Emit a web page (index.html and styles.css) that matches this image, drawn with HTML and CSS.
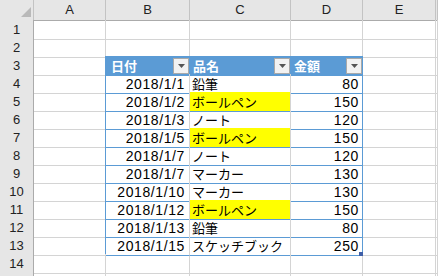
FILE: index.html
```html
<!DOCTYPE html>
<html lang="ja">
<head>
    <meta charset="UTF-8">
    <meta name="viewport" content="width=device-width, initial-scale=1.0">
    <title>Sheet1</title>
    <link rel="stylesheet" href="styles.css">
</head>
<body>
    <div class="sheet">
        <!-- column letters -->
        <div class="row head-row">
            <div class="corner">
                <svg width="33" height="19" viewBox="0 0 33 19"><polygon points="21,17 31,7 31,17" fill="#b9b9b9"/></svg>
            </div>
            <div class="ch">A</div>
            <div class="ch">B</div>
            <div class="ch">C</div>
            <div class="ch">D</div>
            <div class="ch">E</div>
            <div class="ch"></div>
        </div>

        <div class="row">
            <div class="rh">1</div>
            <div class="c"></div><div class="c"></div><div class="c"></div><div class="c"></div><div class="c"></div><div class="c"></div>
        </div>
        <div class="row">
            <div class="rh">2</div>
            <div class="c"></div><div class="c top"></div><div class="c top"></div><div class="c top"></div><div class="c"></div><div class="c"></div>
        </div>

        <!-- table header -->
        <div class="row">
            <div class="rh">3</div>
            <div class="c edge"></div>
            <div class="c th first"><span class="lbl">日付</span><span class="filter"><svg width="7" height="4" viewBox="0 0 7 4"><polygon points="0,0 7,0 3.5,4" fill="#555"/></svg></span></div>
            <div class="c th"><span class="lbl">品名</span><span class="filter"><svg width="7" height="4" viewBox="0 0 7 4"><polygon points="0,0 7,0 3.5,4" fill="#555"/></svg></span></div>
            <div class="c th"><span class="lbl">金額</span><span class="filter"><svg width="7" height="4" viewBox="0 0 7 4"><polygon points="0,0 7,0 3.5,4" fill="#555"/></svg></span></div>
            <div class="c"></div><div class="c"></div>
        </div>

        <div class="row">
            <div class="rh">4</div>
            <div class="c edge"></div>
            <div class="c td num">2018/1/1</div>
            <div class="c td txt">鉛筆</div>
            <div class="c td num last">80</div>
            <div class="c"></div><div class="c"></div>
        </div>
        <div class="row">
            <div class="rh">5</div>
            <div class="c edge"></div>
            <div class="c td num">2018/1/2</div>
            <div class="c td txt hl">ボールペン</div>
            <div class="c td num last">150</div>
            <div class="c"></div><div class="c"></div>
        </div>
        <div class="row">
            <div class="rh">6</div>
            <div class="c edge"></div>
            <div class="c td num">2018/1/3</div>
            <div class="c td txt">ノート</div>
            <div class="c td num last">120</div>
            <div class="c"></div><div class="c"></div>
        </div>
        <div class="row">
            <div class="rh">7</div>
            <div class="c edge"></div>
            <div class="c td num">2018/1/5</div>
            <div class="c td txt hl">ボールペン</div>
            <div class="c td num last">150</div>
            <div class="c"></div><div class="c"></div>
        </div>
        <div class="row">
            <div class="rh">8</div>
            <div class="c edge"></div>
            <div class="c td num">2018/1/7</div>
            <div class="c td txt">ノート</div>
            <div class="c td num last">120</div>
            <div class="c"></div><div class="c"></div>
        </div>
        <div class="row">
            <div class="rh">9</div>
            <div class="c edge"></div>
            <div class="c td num">2018/1/7</div>
            <div class="c td txt">マーカー</div>
            <div class="c td num last">130</div>
            <div class="c"></div><div class="c"></div>
        </div>
        <div class="row">
            <div class="rh">10</div>
            <div class="c edge"></div>
            <div class="c td num">2018/1/10</div>
            <div class="c td txt">マーカー</div>
            <div class="c td num last">130</div>
            <div class="c"></div><div class="c"></div>
        </div>
        <div class="row">
            <div class="rh">11</div>
            <div class="c edge"></div>
            <div class="c td num">2018/1/12</div>
            <div class="c td txt hl">ボールペン</div>
            <div class="c td num last">150</div>
            <div class="c"></div><div class="c"></div>
        </div>
        <div class="row">
            <div class="rh">12</div>
            <div class="c edge"></div>
            <div class="c td num">2018/1/13</div>
            <div class="c td txt">鉛筆</div>
            <div class="c td num last">80</div>
            <div class="c"></div><div class="c"></div>
        </div>
        <div class="row">
            <div class="rh">13</div>
            <div class="c edge"></div>
            <div class="c td num">2018/1/15</div>
            <div class="c td txt">スケッチブック</div>
            <div class="c td num last">250<span class="handle"></span></div>
            <div class="c"></div><div class="c"></div>
        </div>
        <div class="row">
            <div class="rh">14</div>
            <div class="c"></div><div class="c"></div><div class="c"></div><div class="c"></div><div class="c"></div><div class="c"></div>
        </div>
        <div class="row">
            <div class="rh"></div>
            <div class="c"></div><div class="c"></div><div class="c"></div><div class="c"></div><div class="c"></div><div class="c"></div>
        </div>
    </div>
</body>
</html>
```

FILE: styles.css
```css
html, body {
    margin: 0;
    height: 100%;
    overflow: hidden;
}
body {
    background: #fff;
    font-family: "Liberation Sans", Arial, sans-serif;
    color: #000;
}
.sheet {
    display: flex;
    flex-direction: column;
    height: 276px;
    overflow: hidden;
}
.row {
    display: grid;
    grid-template-columns: 34px 72px 84px 101px 72px 73px 1fr;
    flex: none;
    height: 18px;
}
.row > div {
    box-sizing: border-box;
    border-right: 1px solid #d4d4d4;
    border-bottom: 1px solid #d4d4d4;
}

/* column / row headers */
.head-row {
    height: 20px;
}
.head-row > div {
    background: #e6e6e6;
    border-right-color: #c3c3c3;
    border-bottom-color: #ababab;
}
.corner {
    line-height: 0;
}
.ch {
    font-size: 13px;
    text-align: center;
    line-height: 20px;
    color: #222;
}
.rh {
    background: #e6e6e6;
    border-right-color: #ababab !important;
    border-bottom-color: #c6c6c6 !important;
    font-size: 13px;
    text-align: center;
    line-height: 19px;
    color: #222;
}

/* table */
.top {
    border-bottom-color: #5b9bd5 !important;
}
.edge {
    border-right-color: #5b9bd5 !important;
}
.th {
    display: flex;
    align-items: center;
    background: #5b9bd5;
    border-right-color: #5b9bd5 !important;
    border-bottom-color: #5b9bd5 !important;
    padding-left: 3px;
    color: #fff;
    font-family: "Noto Sans CJK JP", sans-serif;
    font-weight: 700;
    font-size: 13px;
}
.th.first {
    padding-left: 5px;
}
.lbl {
    flex: 1;
    line-height: 17px;
}
.filter {
    display: flex;
    align-items: center;
    justify-content: center;
    box-sizing: border-box;
    width: 16px;
    height: 16px;
    background: #f2f2f2;
    border: 1px solid #a9a9a9;
}
.td {
    border-bottom-color: #5b9bd5 !important;
    white-space: nowrap;
}
.num {
    position: relative;
    text-align: right;
    padding-top: 3px;
    padding-right: 4px;
    font-size: 14px;
    letter-spacing: 0.6px;
    line-height: 14px;
}
.txt {
    padding-left: 2px;
    padding-top: 2px;
    font-family: "Noto Sans CJK JP", sans-serif;
    font-size: 13px;
    line-height: 15px;
}
.last {
    padding-right: 3px;
    border-right-color: #5b9bd5 !important;
}
.hl {
    background: #ffff00;
}
.handle {
    position: absolute;
    right: -1px;
    bottom: -1px;
    width: 4px;
    height: 4px;
    background: #3f5fa8;
}
```
